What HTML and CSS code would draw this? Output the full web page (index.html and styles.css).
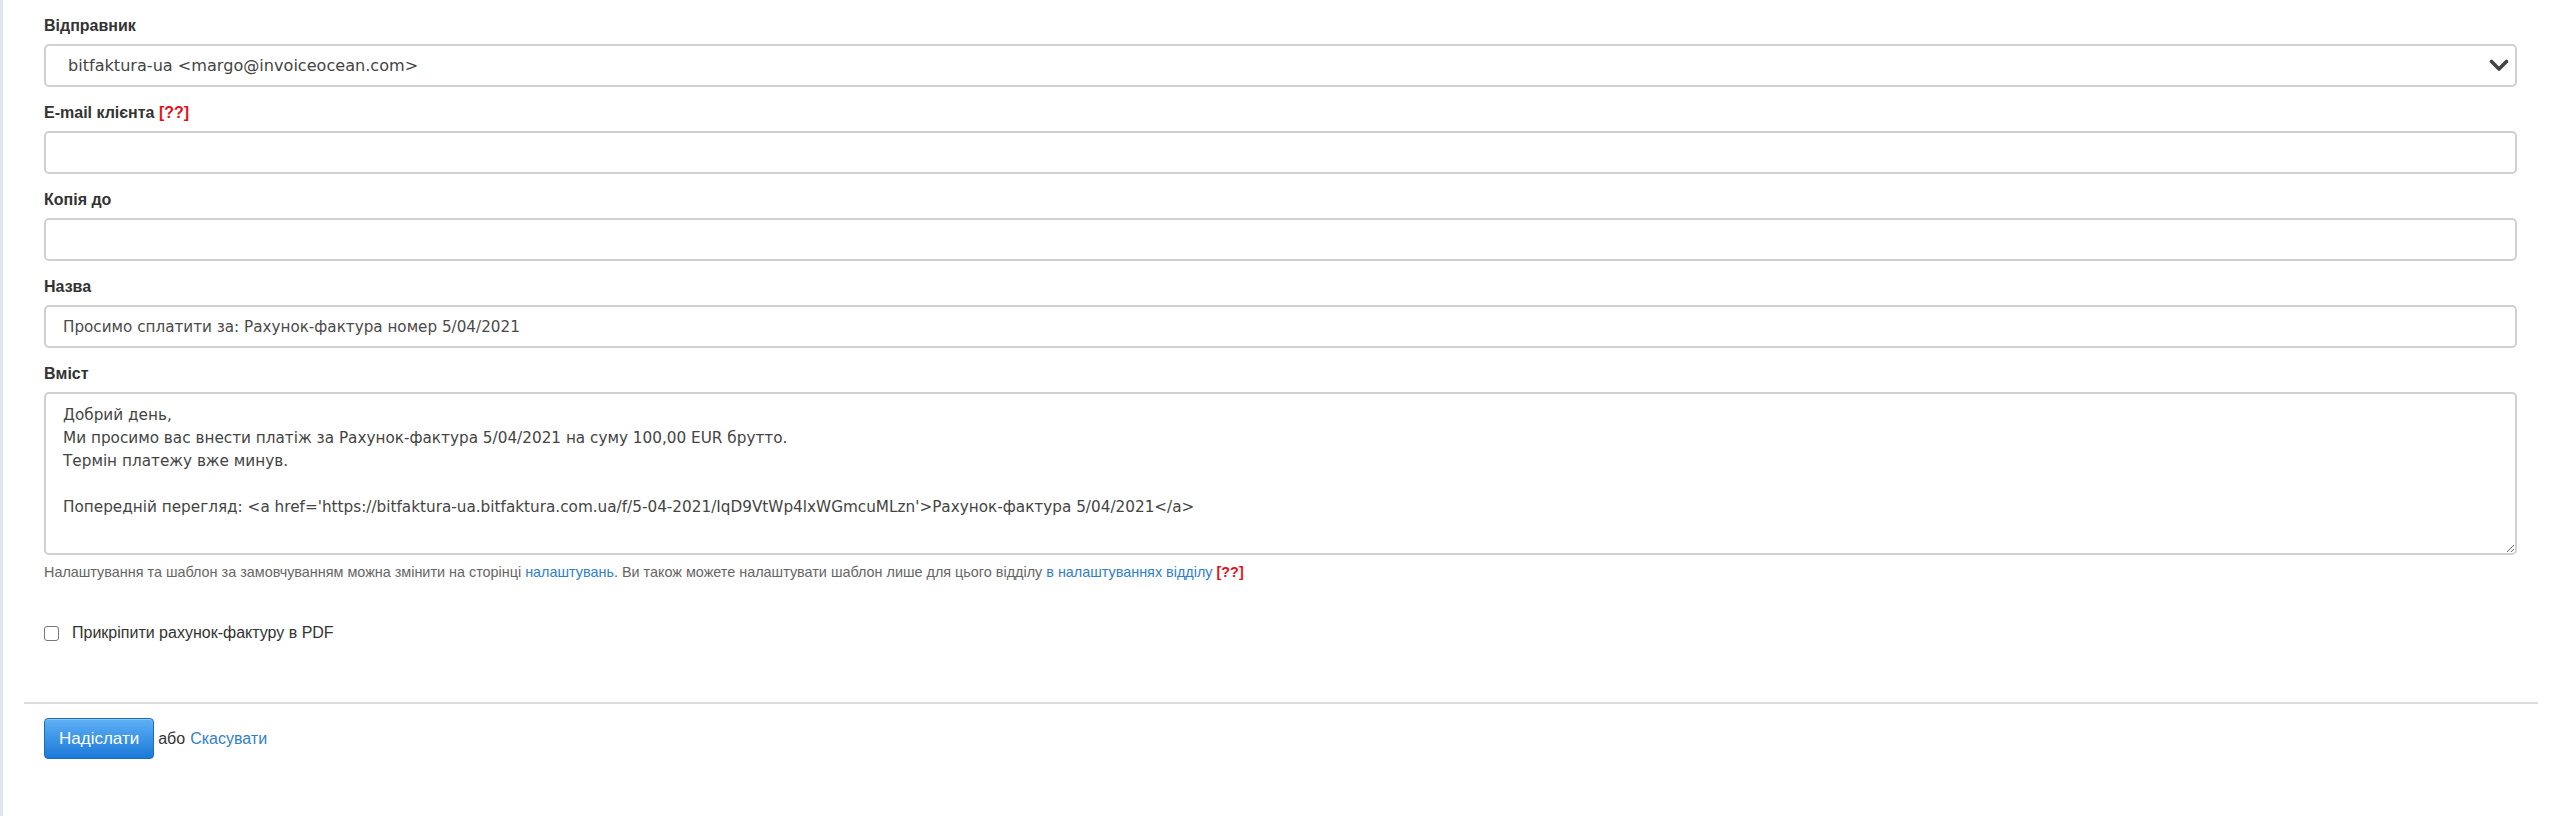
FILE: index.html
```html
<!DOCTYPE html>
<html lang="uk">
<head>
<meta charset="utf-8">
<title>Надіслати рахунок-фактуру</title>
<link rel="stylesheet" href="styles.css">
</head>
<body>
<div class="page">
  <div class="strip"></div>
  <main class="main">
    <form class="fields">
      <div class="field">
        <label class="lbl">Відправник</label>
        <div class="select">
          <span class="select-text">bitfaktura-ua &lt;margo@invoiceocean.com&gt;</span>
          <svg class="chev" width="20" height="13" viewBox="0 0 20 13"><polyline points="2.5,2.5 10,10 17.5,2.5" fill="none" stroke="#444" stroke-width="3.6" stroke-linecap="round" stroke-linejoin="round"/></svg>
        </div>
      </div>
      <div class="field">
        <label class="lbl">E-mail клієнта <span class="req">[??]</span></label>
        <input class="inp" type="text" value="">
      </div>
      <div class="field">
        <label class="lbl">Копія до</label>
        <input class="inp" type="text" value="">
      </div>
      <div class="field">
        <label class="lbl">Назва</label>
        <input class="inp" type="text" value="Просимо сплатити за: Рахунок-фактура номер 5/04/2021">
      </div>
      <div class="field">
        <label class="lbl">Вміст</label>
        <textarea class="area">Добрий день,
Ми просимо вас внести платіж за Рахунок-фактура 5/04/2021 на суму 100,00 EUR брутто.
Термін платежу вже минув.

Попередній перегляд: &lt;a href='https://bitfaktura-ua.bitfaktura.com.ua/f/5-04-2021/IqD9VtWp4lxWGmcuMLzn'&gt;Рахунок-фактура 5/04/2021&lt;/a&gt;</textarea>
      </div>
      <p class="help">Налаштування та шаблон за замовчуванням можна змінити на сторінці <a href="#">налаштувань</a>. Ви також можете налаштувати шаблон лише для цього відділу <a href="#">в налаштуваннях відділу</a> <span class="req">[??]</span></p>
      <label class="check"><input class="cb" type="checkbox"><span>Прикріпити рахунок-фактуру в PDF</span></label>
    </form>
    <div class="actions">
      <button class="btn" type="button">Надіслати</button>
      <span class="or">або</span>
      <a class="cancel" href="#">Скасувати</a>
    </div>
  </main>
</div>
</body>
</html>
```
FILE: styles.css
```css
* { box-sizing: border-box; }
html, body { margin: 0; padding: 0; background: #fff; }
body { font-family: "Liberation Sans", Arial, sans-serif; color: #333; }

.page { display: flex; min-height: 816px; }
.strip { width: 3px; background: #dfe6ee; flex: none; }
.main { flex: 1; padding: 16px 22px 0 21px; }

.fields { display: flex; flex-direction: column; padding: 0 21px 0 20px; }
.field { display: flex; flex-direction: column; margin-bottom: 16px; }
.field:nth-child(5) { margin-bottom: 0; }

.lbl { font-weight: bold; font-size: 16px; line-height: 20px; color: #333; margin-bottom: 8px; }
.req { color: #e8101b; font-weight: bold; }

.select {
  height: 43px; border: 2px solid #d0d0d0; border-radius: 5px; background: #fff;
  display: flex; align-items: center; justify-content: space-between;
  padding: 0 6px 0 22px;
}
.select-text { font-family: "DejaVu Sans", Verdana, sans-serif; font-size: 16.1px; color: #444; }
.chev { display: block; }

.inp {
  height: 43px; border: 2px solid #d0d0d0; border-radius: 5px; background: #fff;
  padding: 0 17px; font-family: "DejaVu Sans", Verdana, sans-serif; font-size: 15.2px; color: #4a4a4a;
  outline: none; width: 100%;
}
.area {
  height: 163px; border: 2px solid #d0d0d0; border-radius: 5px; background: #fff;
  padding: 10px 17px; font-family: "DejaVu Sans", Verdana, sans-serif; font-size: 15.25px; line-height: 23px; color: #444;
  outline: none; width: 100%; resize: both; margin: 0; display: block;
}

.help { margin: 8px 0 0; font-size: 14.4px; line-height: 18px; color: #666; }
.help a { color: #2f7fcc; text-decoration: none; }

.check { display: flex; align-items: center; margin-top: 42px; font-size: 16px; line-height: 20px; color: #333; }
.cb {
  appearance: none; -webkit-appearance: none; margin: 0 13px 0 0;
  width: 15px; height: 15px; border: 1.5px solid #777; border-radius: 3px; background: #fff;
}

.actions { margin-top: 59px; border-top: 2px solid #dcdcdc; padding: 14px 20px 0; display: flex; align-items: center; }
.btn {
  height: 41px; padding: 0 14px; border: 1px solid #1b6cc0; border-radius: 4px;
  background: linear-gradient(#5fb0f5, #1b79d9); color: #fff;
  font-family: "Liberation Sans", Arial, sans-serif; font-size: 17px;
  box-shadow: inset 0 1px 0 rgba(255,255,255,0.3);
}
.or { margin-left: 4px; font-size: 16px; color: #333; }
.cancel { margin-left: 5px; font-size: 16px; color: #2f7fcc; text-decoration: none; }
```
